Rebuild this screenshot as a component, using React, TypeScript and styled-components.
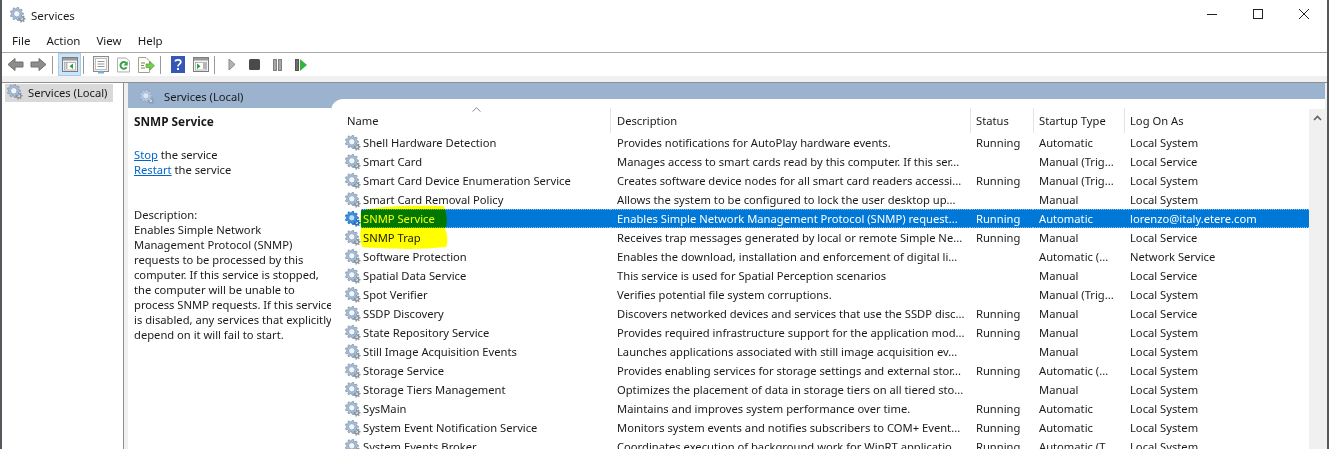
import styled, { createGlobalStyle } from "styled-components";

const GlobalStyle = createGlobalStyle`
  html, body {
    margin: 0;
    padding: 0;
    height: 449px;
    overflow: hidden;
    background: #55585c;
  }
  * {
    box-sizing: border-box;
  }
`;

type Service = {
  name: string;
  description: string;
  status?: string;
  startup: string;
  logOn: string;
  selected?: boolean;
};

const services: Service[] = [
  { name: "Shell Hardware Detection", description: "Provides notifications for AutoPlay hardware events.", status: "Running", startup: "Automatic", logOn: "Local System" },
  { name: "Smart Card", description: "Manages access to smart cards read by this computer. If this ser...", startup: "Manual (Trig...", logOn: "Local Service" },
  { name: "Smart Card Device Enumeration Service", description: "Creates software device nodes for all smart card readers accessi...", status: "Running", startup: "Manual (Trig...", logOn: "Local System" },
  { name: "Smart Card Removal Policy", description: "Allows the system to be configured to lock the user desktop up...", startup: "Manual", logOn: "Local System" },
  { name: "SNMP Service", description: "Enables Simple Network Management Protocol (SNMP) request...", status: "Running", startup: "Automatic", logOn: "lorenzo@italy.etere.com", selected: true },
  { name: "SNMP Trap", description: "Receives trap messages generated by local or remote Simple Ne...", status: "Running", startup: "Manual", logOn: "Local Service" },
  { name: "Software Protection", description: "Enables the download, installation and enforcement of digital li...", startup: "Automatic (...", logOn: "Network Service" },
  { name: "Spatial Data Service", description: "This service is used for Spatial Perception scenarios", startup: "Manual", logOn: "Local Service" },
  { name: "Spot Verifier", description: "Verifies potential file system corruptions.", startup: "Manual (Trig...", logOn: "Local System" },
  { name: "SSDP Discovery", description: "Discovers networked devices and services that use the SSDP disc...", status: "Running", startup: "Manual", logOn: "Local Service" },
  { name: "State Repository Service", description: "Provides required infrastructure support for the application mod...", status: "Running", startup: "Manual", logOn: "Local System" },
  { name: "Still Image Acquisition Events", description: "Launches applications associated with still image acquisition ev...", startup: "Manual", logOn: "Local System" },
  { name: "Storage Service", description: "Provides enabling services for storage settings and external stor...", status: "Running", startup: "Automatic (...", logOn: "Local System" },
  { name: "Storage Tiers Management", description: "Optimizes the placement of data in storage tiers on all tiered sto...", startup: "Manual", logOn: "Local System" },
  { name: "SysMain", description: "Maintains and improves system performance over time.", status: "Running", startup: "Automatic", logOn: "Local System" },
  { name: "System Event Notification Service", description: "Monitors system events and notifies subscribers to COM+ Event...", status: "Running", startup: "Automatic", logOn: "Local System" },
  { name: "System Events Broker", description: "Coordinates execution of background work for WinRT applicatio...", status: "Running", startup: "Automatic (T...", logOn: "Local System" },
];

const gearPath = (cx: number, cy: number, outer: number, inner: number, teeth: number) => {
  const points: string[] = [];
  const step = (Math.PI * 2) / teeth;
  for (let i = 0; i < teeth; i++) {
    const a = i * step;
    [
      [a - step * 0.3, inner],
      [a - step * 0.16, outer],
      [a + step * 0.16, outer],
      [a + step * 0.3, inner],
    ].forEach(([t, r]) => {
      points.push(`${(cx + Math.cos(t) * r).toFixed(2)} ${(cy + Math.sin(t) * r).toFixed(2)}`);
    });
  }
  return `M${points.join("L")}Z`;
};

const GearIcon = ({ tone = "normal" }: { tone?: "normal" | "selected" | "faded" }) => {
  const palette = {
    normal: { body: "#a9bed4", edge: "#7892ad", hole: "#f2f6fa", small: "#8a949e" },
    selected: { body: "#3c94e4", edge: "#0f5fae", hole: "#bcdcf6", small: "#1e6fbd" },
    faded: { body: "#b9cbe0", edge: "#8ba5c2", hole: "#dce6f1", small: "#8da0b5" },
  }[tone];
  return (
    <svg width="16" height="16" viewBox="0 0 16 16">
      <path d={gearPath(11.8, 11.8, 3.9, 2.8, 7)} fill={palette.small} />
      <circle cx="11.8" cy="11.8" r="1.2" fill="#e8e8e8" />
      <path d={gearPath(6.8, 6.8, 6.6, 5.1, 9)} fill={palette.body} stroke={palette.edge} strokeWidth="0.7" />
      <circle cx="6.8" cy="6.8" r="3.2" fill={palette.hole} stroke={palette.edge} strokeWidth="0.7" />
    </svg>
  );
};

const Window = styled.div`
  width: 1325px;
  height: 449px;
  margin-left: 2px;
  display: flex;
  flex-direction: column;
  overflow: hidden;
  background: #fff;
  color: #1a1a1a;
  font-family: "Noto Sans", sans-serif;
  font-size: 11.2px;
`;

const TitleBar = styled.div`
  height: 30px;
  flex: none;
  display: flex;
  align-items: center;
  padding-left: 8px;
  font-size: 11.5px;
`;

const TitleText = styled.span`
  flex: 1;
  margin-left: 5px;
`;

const WindowButton = styled.div`
  width: 46px;
  height: 30px;
  padding-bottom: 2px;
  display: flex;
  align-items: center;
  justify-content: center;
`;

const MenuBar = styled.div`
  height: 23px;
  flex: none;
  display: flex;
  align-items: center;
  gap: 16px;
  padding: 0 0 1px 10px;
  border-bottom: 1px solid #a8a8a8;
  font-size: 11.5px;
`;

const Toolbar = styled.div`
  height: 23px;
  flex: none;
  display: flex;
  align-items: center;
  padding-left: 2px;
`;

const ToolButton = styled.div<{ $active?: boolean }>`
  width: 23px;
  height: 23px;
  display: flex;
  align-items: center;
  justify-content: center;
  background: ${(p) => (p.$active ? "#cce4f7" : "transparent")};
  border: 1px solid ${(p) => (p.$active ? "#a4cdee" : "transparent")};
`;

const ToolSeparator = styled.div`
  width: 1px;
  height: 18px;
  margin: 0 5px 0 2px;
  background: #9a9a9a;
`;

const Strip = styled.div`
  height: 6px;
  flex: none;
  background: #f0f0f0;
`;

const Main = styled.div`
  flex: 1;
  min-height: 0;
  display: flex;
  border-top: 1px solid #8f8f8f;
  background: #f0f0f0;
`;

const Tree = styled.div`
  width: 122px;
  flex: none;
  padding: 1px 0 0 3px;
  background: #fff;
  border-right: 1px solid #8f8f8f;
`;

const TreeItem = styled.div`
  width: 108px;
  height: 18px;
  display: flex;
  align-items: center;
  gap: 5px;
  padding: 0 0 2px 2px;
  background: #d9d9d9;
`;

const DetailPane = styled.div`
  width: 1197px;
  margin-left: 4px;
  flex: none;
  display: grid;
  grid-template-columns: 203px 1fr;
  background: #9bb3ce;
  overflow: hidden;
`;

const InfoColumn = styled.div`
  display: flex;
  flex-direction: column;
`;

const PaneHead = styled.div`
  height: 25px;
  flex: none;
  display: flex;
  align-items: center;
  gap: 9px;
  padding: 2px 0 0 11px;
`;

const InfoBody = styled.div`
  flex: 1;
  padding: 6px 0 0 6px;
  background: #fff;
  line-height: 15px;
  white-space: nowrap;
`;

const InfoTitle = styled.div`
  font-weight: 700;
  font-size: 11.8px;
  margin-bottom: 18px;
`;

const ActionLine = styled.div``;

const ActionLink = styled.a`
  color: #0066cc;
  text-decoration: underline;
`;

const InfoText = styled.div`
  margin-top: 30px;
  line-height: 15px;
`;

const ListPanel = styled.div`
  position: relative;
  margin-top: 16px;
  display: grid;
  grid-template-columns: 1fr 16px;
  background: #fff;
  border-top-left-radius: 12px;
  overflow: hidden;
`;

const Columns = styled.div`
  display: grid;
  grid-template-columns: 16px 249px 360px 63px 91px 185px;
  padding-left: 14px;
`;

const HeaderRow = styled(Columns)`
  height: 34px;
  padding-top: 9px;
`;

const NameHeader = styled.div`
  position: relative;
  grid-column: span 2;
  display: flex;
  align-items: center;
  padding-left: 2px;
`;

const HeaderCell = styled.div<{ $pad: number }>`
  display: flex;
  align-items: center;
  padding-left: ${(p) => p.$pad}px;
  border-left: 1px solid #e4e4e4;
`;

const SortCaret = styled.svg`
  position: absolute;
  left: 127px;
  top: -1px;
`;

const Row = styled(Columns)`
  height: 19px;
  align-items: stretch;
`;

const RowIcon = styled.div`
  display: flex;
  align-items: center;
`;

const Cell = styled.div<{ $selected?: boolean; $pad: number }>`
  display: flex;
  align-items: center;
  padding-left: ${(p) => p.$pad}px;
  white-space: nowrap;
  overflow: hidden;
  padding-bottom: 1px;
  background: ${(p) => (p.$selected ? "#0078d7" : "transparent")};
  color: ${(p) => (p.$selected ? "#fff" : "inherit")};
  border-top: 1px dotted ${(p) => (p.$selected ? "#8fc0ea" : "transparent")};
  border-bottom: 1px dotted ${(p) => (p.$selected ? "#8fc0ea" : "transparent")};
`;

const Scrollbar = styled.div`
  background: #f0f0f0;
  margin-top: 10px;
  display: flex;
  justify-content: center;
  padding-top: 6px;
`;

const Marker = styled.svg`
  position: absolute;
  left: 29px;
  top: 106px;
  mix-blend-mode: multiply;
  pointer-events: none;
`;

const BackArrow = ({ flip }: { flip?: boolean }) => (
  <svg width="17" height="15" viewBox="0 0 17 15" style={flip ? { transform: "scaleX(-1)" } : undefined}>
    <path d="M1 7.5 8 1.5V5H16V10H8V13.5Z" fill="#8d8d8d" stroke="#6e6e6e" strokeWidth="1" strokeLinejoin="round" />
  </svg>
);

const PaneWindowIcon = ({ arrow, active }: { arrow: "left" | "right"; active?: boolean }) => (
  <svg width="16" height="15" viewBox="0 0 16 15">
    <rect x="0.5" y="0.5" width="15" height="14" fill={active ? "#e8f2fa" : "#f5f5f5"} stroke="#7d7d7d" />
    <rect x="1" y="1" width="14" height="2.5" fill="#9a9a9a" />
    <rect x="2.5" y="5.5" width="11" height="7.5" fill="#fff" stroke="#a9a9a9" strokeWidth="0.8" />
    {arrow === "left" ? <path d="M11 6.5V12L7.5 9.2Z" fill="#2e9e3c" /> : <path d="M4 6.5V12L7.5 9.2Z" fill="#2e9e3c" />}
    <path d={arrow === "left" ? "M3.5 7h2M3.5 9h2M3.5 11h2" : "M10 7h3M10 9h3M10 11h3"} stroke="#6b6b6b" strokeWidth="1" />
  </svg>
);

const PropertiesIcon = () => (
  <svg width="16" height="18" viewBox="0 0 16 18">
    <rect x="0.5" y="0.5" width="15" height="15" fill="#f0f0f0" stroke="#8a8a8a" />
    <rect x="2.5" y="2.5" width="11" height="11" fill="#fff" stroke="#bdbdbd" />
    <path d="M4.5 5.5h7M4.5 8h7M4.5 10.5h7" stroke="#8c98a3" strokeWidth="1" />
    <rect x="5" y="15.5" width="6" height="2" fill="#6fb3e3" />
  </svg>
);

const RefreshIcon = () => (
  <svg width="13" height="16" viewBox="0 0 14 16">
    <path d="M0.5 0.5H10L13.5 4V15.5H0.5Z" fill="#fff" stroke="#a8a8a8" />
    <path d="M10.2 6.2A3.6 3.6 0 1 0 10.4 10.4" fill="none" stroke="#3aa245" strokeWidth="2.2" />
    <path d="M11.5 4V8.5H7Z" fill="#3aa245" />
  </svg>
);

const ExportIcon = () => (
  <svg width="17" height="16" viewBox="0 0 17 16">
    <path d="M0.5 0.5H8L11.5 4V15.5H0.5Z" fill="#fffef2" stroke="#a0a0a0" />
    <path d="M3 6h4M3 8.5h3M3 11h4" stroke="#7f7f7f" strokeWidth="1" />
    <path d="M8 7H12V4.5L16.5 8.8 12 13V10.5H8Z" fill="#79cb50" stroke="#4fa838" strokeWidth="0.7" />
  </svg>
);

const HelpIcon = () => (
  <svg width="14" height="17" viewBox="0 0 14 17">
    <rect width="14" height="17" fill="#3558b8" />
    <path d="M4.3 5.5C4.5 3.3 9.8 3.1 9.8 5.9 9.8 8.2 7 8 7 10.5" fill="none" stroke="#fff" strokeWidth="1.8" />
    <rect x="6" y="12" width="2" height="2" fill="#fff" />
  </svg>
);

const PlayIcon = () => (
  <svg width="8" height="13" viewBox="0 0 8 13">
    <path d="M1 1 7 6.5 1 12Z" fill="#b3b3b3" stroke="#8a8a8a" />
  </svg>
);

const StopIcon = () => (
  <svg width="11" height="11" viewBox="0 0 11 11">
    <rect width="11" height="11" rx="1.5" fill="#4a4a4a" />
  </svg>
);

const PauseIcon = () => (
  <svg width="9" height="12" viewBox="0 0 9 12">
    <rect x="0.5" y="0.5" width="3" height="11" fill="#a6a6a6" stroke="#808080" />
    <rect x="5.5" y="0.5" width="3" height="11" fill="#a6a6a6" stroke="#808080" />
  </svg>
);

const ResumeIcon = () => (
  <svg width="12" height="12" viewBox="0 0 12 12">
    <rect x="0.5" y="0.5" width="3" height="11" fill="#6d6d6d" stroke="#555" />
    <path d="M5 0 12 6 5 12Z" fill="#35b53f" />
  </svg>
);

export default function App() {
  return (
    <>
      <GlobalStyle />
      <Window>
        <TitleBar>
          <GearIcon />
          <TitleText>Services</TitleText>
          <WindowButton>
            <svg width="10" height="10" viewBox="0 0 10 10">
              <path d="M0 5.5H10" stroke="#222" />
            </svg>
          </WindowButton>
          <WindowButton>
            <svg width="10" height="10" viewBox="0 0 10 10">
              <rect x="0.5" y="0.5" width="9" height="9" fill="none" stroke="#222" />
            </svg>
          </WindowButton>
          <WindowButton>
            <svg width="10" height="10" viewBox="0 0 10 10">
              <path d="M0 0 10 10M10 0 0 10" stroke="#222" />
            </svg>
          </WindowButton>
        </TitleBar>
        <MenuBar>
          <span>File</span>
          <span>Action</span>
          <span>View</span>
          <span>Help</span>
        </MenuBar>
        <Toolbar>
          <ToolButton><BackArrow /></ToolButton>
          <ToolButton><BackArrow flip /></ToolButton>
          <ToolSeparator />
          <ToolButton $active><PaneWindowIcon arrow="left" active /></ToolButton>
          <ToolSeparator />
          <ToolButton><PropertiesIcon /></ToolButton>
          <ToolButton><RefreshIcon /></ToolButton>
          <ToolButton><ExportIcon /></ToolButton>
          <ToolSeparator />
          <ToolButton><HelpIcon /></ToolButton>
          <ToolButton><PaneWindowIcon arrow="right" /></ToolButton>
          <ToolSeparator />
          <ToolButton><PlayIcon /></ToolButton>
          <ToolButton><StopIcon /></ToolButton>
          <ToolButton><PauseIcon /></ToolButton>
          <ToolButton><ResumeIcon /></ToolButton>
        </Toolbar>
        <Strip />
        <Main>
          <Tree>
            <TreeItem>
              <GearIcon />
              <span>Services (Local)</span>
            </TreeItem>
          </Tree>
          <DetailPane>
            <InfoColumn>
              <PaneHead>
                <GearIcon tone="faded" />
                <span>Services (Local)</span>
              </PaneHead>
              <InfoBody>
                <InfoTitle>SNMP Service</InfoTitle>
                <ActionLine><ActionLink>Stop</ActionLink> the service</ActionLine>
                <ActionLine><ActionLink>Restart</ActionLink> the service</ActionLine>
                <InfoText>
                  Description:<br />
                  Enables Simple Network<br />
                  Management Protocol (SNMP)<br />
                  requests to be processed by this<br />
                  computer. If this service is stopped,<br />
                  the computer will be unable to<br />
                  process SNMP requests. If this service<br />
                  is disabled, any services that explicitly<br />
                  depend on it will fail to start.
                </InfoText>
              </InfoBody>
            </InfoColumn>
            <ListPanel>
              <div>
                <HeaderRow>
                  <NameHeader>
                    Name
                    <SortCaret width="9" height="5" viewBox="0 0 9 5">
                      <path d="M0.5 4.5 4.5 0.8 8.5 4.5" fill="none" stroke="#8a8a8a" />
                    </SortCaret>
                  </NameHeader>
                  <HeaderCell $pad={6}>Description</HeaderCell>
                  <HeaderCell $pad={5}>Status</HeaderCell>
                  <HeaderCell $pad={5}>Startup Type</HeaderCell>
                  <HeaderCell $pad={5}>Log On As</HeaderCell>
                </HeaderRow>
                {services.map((s) => (
                  <Row key={s.name}>
                    <RowIcon>
                      <GearIcon tone={s.selected ? "selected" : "normal"} />
                    </RowIcon>
                    <Cell $pad={2} $selected={s.selected}>{s.name}</Cell>
                    <Cell $pad={7} $selected={s.selected}>{s.description}</Cell>
                    <Cell $pad={6} $selected={s.selected}>{s.status}</Cell>
                    <Cell $pad={6} $selected={s.selected}>{s.startup}</Cell>
                    <Cell $pad={6} $selected={s.selected}>{s.logOn}</Cell>
                  </Row>
                ))}
              </div>
              <Scrollbar>
                <svg width="9" height="6" viewBox="0 0 9 6">
                  <path d="M1 5 4.5 1.5 8 5" fill="none" stroke="#606060" strokeWidth="1.6" />
                </svg>
              </Scrollbar>
              <Marker width="90" height="46" viewBox="0 0 90 46">
                <path d="M1 6C14 1 50 0 84 1 87 10 88 18 85 24 88 30 88 38 86 42 60 45 24 44 2 42 0 34 0 28 1 24 0 18 0 12 1 6Z" fill="#ffff00" />
              </Marker>
            </ListPanel>
          </DetailPane>
        </Main>
      </Window>
    </>
  );
}
